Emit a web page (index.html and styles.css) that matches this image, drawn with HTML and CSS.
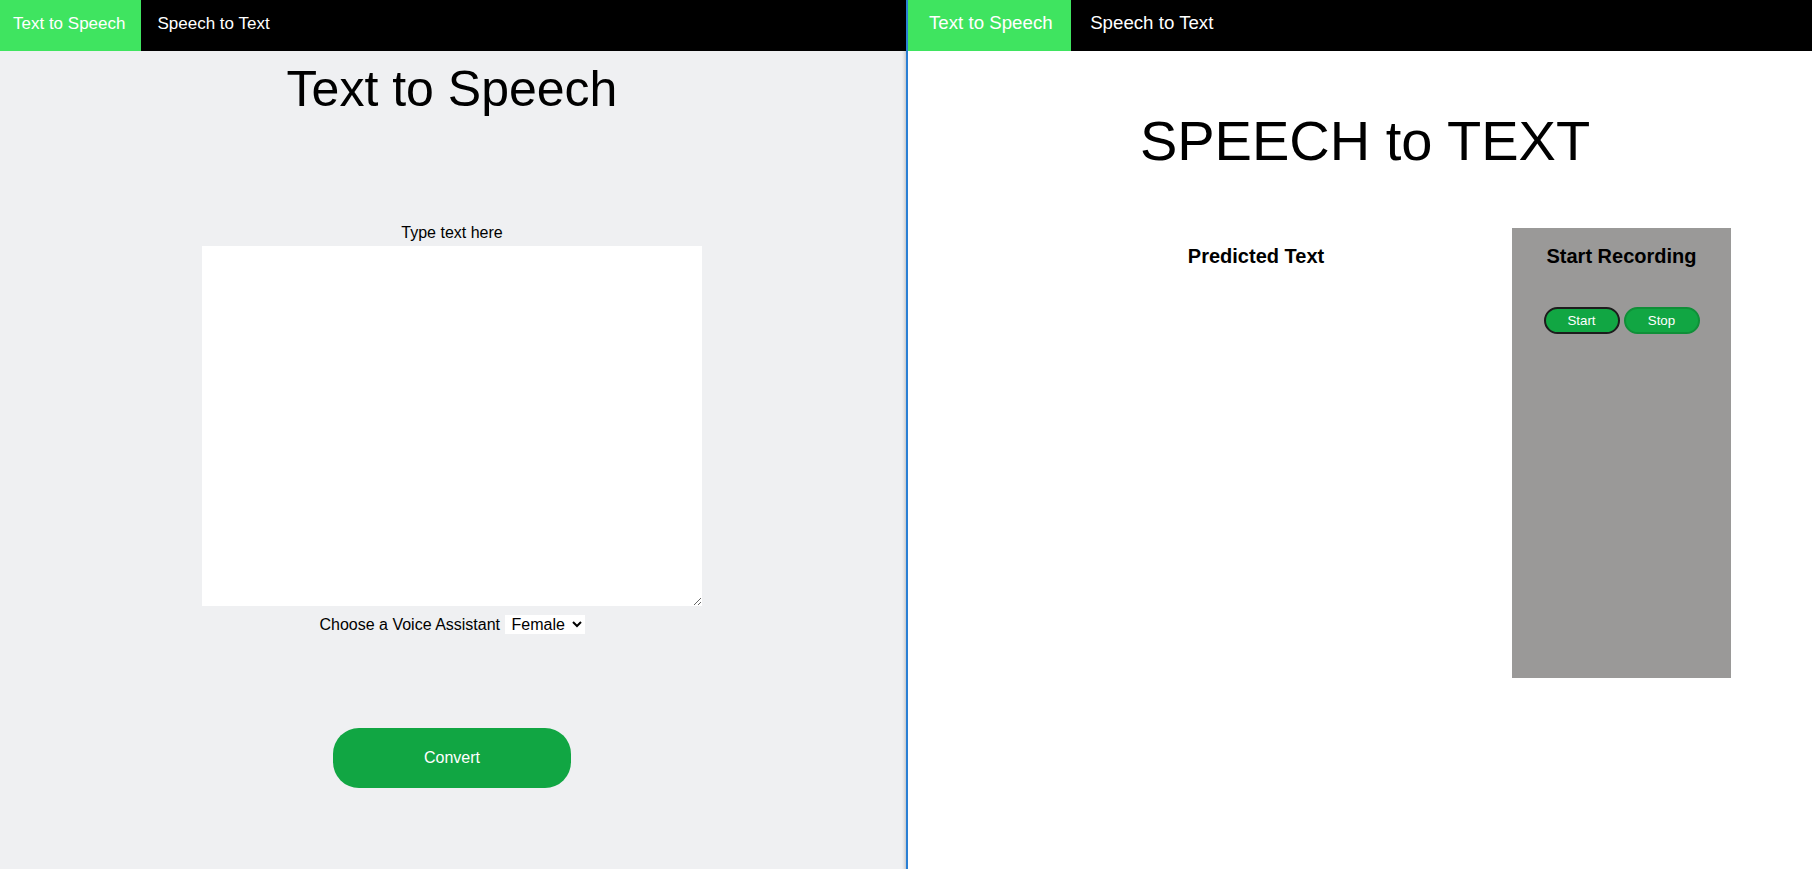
FILE: index.html
```html
<!DOCTYPE html>
<html lang="en">
<head>
<meta charset="utf-8">
<title>Text to Speech / Speech to Text</title>
<link rel="stylesheet" href="styles.css">
</head>
<body>
<div class="split">
  <section class="pane pane-left">
    <nav class="nav nav-left">
      <a class="tab tab-active" href="#">Text to Speech</a>
      <a class="tab tab-second" href="#">Speech to Text</a>
    </nav>
    <main class="tts">
      <h1 class="tts-title">Text to Speech</h1>
      <label class="tts-label" for="tts-input">Type text here</label>
      <textarea id="tts-input" class="tts-input"></textarea>
      <div class="voice-row"><span class="voice-label">Choose a Voice Assistant</span> <select class="voice-select"><option>Female</option><option>Male</option></select></div>
      <button class="convert-btn" type="button">Convert</button>
    </main>
  </section>
  <section class="pane pane-right">
    <nav class="nav nav-right">
      <a class="tab tab-active" href="#">Text to Speech</a>
      <a class="tab tab-second" href="#">Speech to Text</a>
    </nav>
    <main class="stt">
      <h1 class="stt-title">SPEECH to TEXT</h1>
      <div class="stt-row">
        <div class="predicted">
          <h3 class="col-title">Predicted Text</h3>
        </div>
        <div class="recorder">
          <h3 class="col-title">Start Recording</h3>
          <div class="rec-buttons">
            <button class="rec-btn rec-start" type="button">Start</button>
            <button class="rec-btn rec-stop" type="button">Stop</button>
          </div>
        </div>
      </div>
    </main>
  </section>
</div>
</body>
</html>
```

FILE: styles.css
```css
* {
  box-sizing: border-box;
}

html, body {
  margin: 0;
  padding: 0;
  height: 100%;
  overflow: hidden;
}

body {
  font-family: "Liberation Sans", Arial, sans-serif;
  color: #000;
  background: #fff;
}

.split {
  display: flex;
  height: 869px;
}

.pane {
  height: 100%;
}

.pane-left {
  width: 906px;
  flex: none;
  background: linear-gradient(to right, #eff0f2 902px, #e2e3e5 904px, #c9cacc 906px);
}

.pane-right {
  flex: 1;
  background: #fff;
  border-left: 2px solid #2a7fd4;
}

/* navigation */
.nav {
  display: flex;
  height: 51px;
  background: #000;
}

.tab {
  display: block;
  height: 51px;
  color: #fff;
  text-decoration: none;
  white-space: nowrap;
}

.tab-active {
  background: #3fe460;
}

.nav-left .tab {
  font-size: 17px;
  padding-top: 14px;
}

.nav-left .tab-active {
  padding-left: 13px;
  padding-right: 15.5px;
}

.nav-left .tab-second {
  padding-left: 16.5px;
  padding-right: 16px;
}

.nav-right .tab {
  font-size: 18.7px;
  padding-top: 12px;
}

.nav-right .tab-active {
  padding-left: 21px;
  padding-right: 18px;
}

.nav-right .tab-second {
  padding-left: 19.5px;
  padding-right: 18px;
}

/* text to speech */
.tts {
  padding-right: 2px;
  display: flex;
  flex-direction: column;
  align-items: center;
}

.tts-title {
  margin: 9px 0 0;
  font-size: 50px;
  line-height: 58px;
  font-weight: normal;
}

.tts-label {
  display: block;
  margin-top: 106px;
  font-size: 16px;
  line-height: 18px;
}

.tts-input {
  display: block;
  margin-top: 4px;
  width: 500px;
  height: 360px;
  border: none;
  background: #fff;
  font-family: "Liberation Sans", Arial, sans-serif;
  font-size: 16px;
  padding: 2px;
}

.voice-row {
  margin-top: 9px;
  font-size: 16px;
  line-height: 19px;
  white-space: nowrap;
}

.voice-select {
  vertical-align: top;
  width: 80px;
  height: 19px;
  border: none;
  border-radius: 0;
  background-color: #fff;
  color: #000;
  font-family: "Liberation Sans", Arial, sans-serif;
  font-size: 16px;
  padding: 0 0 0 3px;
}

.convert-btn {
  margin-top: 94px;
  width: 238px;
  height: 60px;
  border: none;
  border-radius: 26px;
  background: #11a643;
  color: #fff;
  font-family: "Liberation Sans", Arial, sans-serif;
  font-size: 16px;
}

/* speech to text */
.stt-title {
  margin: 58px 0 0;
  padding-left: 10px;
  text-align: center;
  font-size: 56px;
  line-height: 64px;
  font-weight: normal;
}

.stt-row {
  display: flex;
  justify-content: flex-end;
  padding-right: 81px;
  margin-top: 55px;
}

.predicted {
  width: 512px;
  padding-top: 17px;
  text-align: center;
}

.recorder {
  width: 219px;
  height: 450px;
  padding-top: 17px;
  background: #9a9998;
  text-align: center;
}

.col-title {
  margin: 0;
  font-size: 20px;
  line-height: 23px;
  font-weight: bold;
}

.rec-buttons {
  display: flex;
  justify-content: center;
  gap: 4px;
  margin-top: 39px;
}

.rec-btn {
  width: 76px;
  height: 27px;
  padding: 0;
  border-radius: 14px;
  background: #11a643;
  color: #fff;
  font-family: "Liberation Sans", Arial, sans-serif;
  font-size: 13.33px;
}

.rec-start {
  border: 2px solid #1c1c1c;
}

.rec-stop {
  border: 2px solid #0f8f38;
}
```
